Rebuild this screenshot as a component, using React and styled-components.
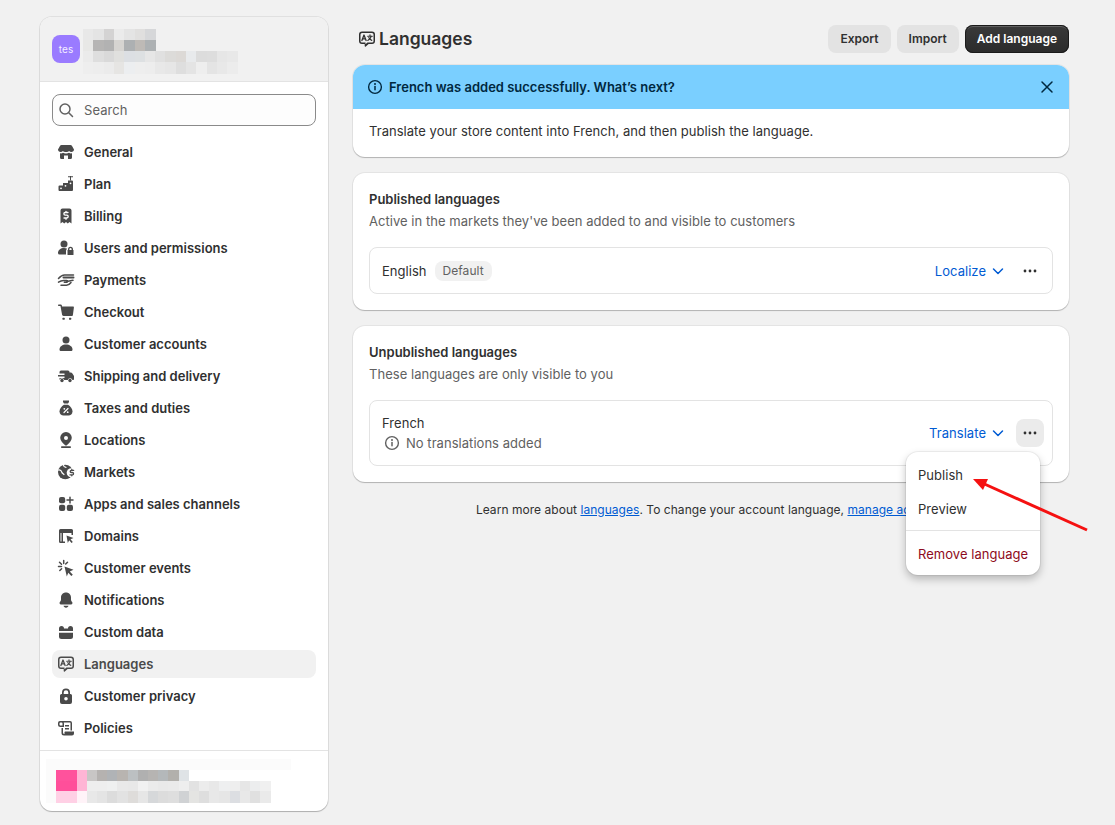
import React from 'react';
import styled, { createGlobalStyle } from 'styled-components';

const GlobalStyle = createGlobalStyle`
  html, body { margin: 0; padding: 0; background: #f1f1f1; }
  body { font-family: Inter, "Noto Sans", "Liberation Sans", sans-serif; font-size: 13px; line-height: 20px; letter-spacing: 0.04px; color: #303030; }
  * { box-sizing: border-box; }
`;

const Page = styled.div`
  position: relative;
  width: 1115px;
  height: 825px;
  overflow: hidden;
  display: flex;
  align-items: flex-start;
  padding: 17px 0 0 40px;
  gap: 25px;
`;

const Sidebar = styled.aside`
  width: 288px;
  height: 794px;
  background: #fff;
  border-radius: 12px;
  overflow: hidden;
  display: flex;
  flex-direction: column;
  box-shadow: 0 0 0 1px rgba(0, 0, 0, 0.07), 0 1px 1px rgba(0, 0, 0, 0.22);
`;

const StoreHeader = styled.div`
  height: 65px;
  flex: none;
  background: #f1f1f1;
  border-bottom: 1px solid #e3e3e3;
  display: flex;
  align-items: flex-start;
  padding: 12px 0 0 12px;
  gap: 3px;
`;

const Avatar = styled.div`
  width: 28px;
  height: 28px;
  margin-top: 6px;
  border-radius: 8px;
  background: #9a7bff;
  color: #f4efff;
  font-size: 10px;
  display: flex;
  align-items: center;
  justify-content: center;
`;

const SearchWrap = styled.label`
  margin: 12px 12px 0;
  height: 32px;
  flex: none;
  display: flex;
  align-items: center;
  gap: 8px;
  padding: 0 6px 0 3px;
  border: 1px solid #8a8a8a;
  border-radius: 8px;
  background: #fdfdfd;
  color: #616161;
`;

const SearchInput = styled.input`
  flex: 1;
  min-width: 0;
  border: 0;
  outline: 0;
  padding: 0;
  background: transparent;
  font: inherit;
  letter-spacing: inherit;
  color: #303030;
  &::placeholder { color: #616161; opacity: 1; }
`;

const Nav = styled.nav`
  flex: 1;
  display: flex;
  flex-direction: column;
  gap: 4px;
  padding: 12px 12px 0;
`;

const NavItem = styled.a`
  height: 28px;
  flex: none;
  display: flex;
  align-items: center;
  gap: 8px;
  padding: 0 4px;
  border-radius: 8px;
  font-weight: 590;
  letter-spacing: 0;
  color: ${p => (p.$active ? '#4a4a4a' : '#303030')};
  background: ${p => (p.$active ? '#f1f1f1' : 'transparent')};
  svg { color: #4a4a4a; flex: none; }
`;

const SideFooter = styled.div`
  height: 61px;
  flex: none;
  border-top: 1px solid #e3e3e3;
  padding: 8px 0 0 6px;
`;

const Main = styled.main`
  width: 716px;
  margin-top: 8px;
  display: flex;
  flex-direction: column;
`;

const TitleBar = styled.header`
  height: 28px;
  display: flex;
  align-items: center;
  justify-content: space-between;
  margin-bottom: 12px;
`;

const Title = styled.h1`
  margin: 0 0 0 4px;
  display: flex;
  align-items: center;
  gap: 2px;
  font-size: 17.5px;
  line-height: 28px;
  font-weight: 600;
  letter-spacing: 0;
  color: #303030;
`;

const Actions = styled.div`
  display: flex;
  gap: 6px;
`;

const Button = styled.button`
  height: 28px;
  padding: 0 12px;
  border-radius: 8px;
  font: inherit;
  font-size: 12px;
  font-weight: 570;
  letter-spacing: 0;
  border: 0;
  color: #303030;
  background: #e3e3e3;
`;

const PrimaryButton = styled(Button)`
  color: #fff;
  background: linear-gradient(#3a3a3a, #2b2b2b);
  box-shadow: 0 0 0 1px #1a1a1a inset, 0 2px 0 0 rgba(255, 255, 255, 0.2) inset;
`;

const Card = styled.section`
  position: relative;
  background: #fff;
  border-radius: 12px;
  margin-bottom: 16px;
  box-shadow: 0 0 0 1px rgba(0, 0, 0, 0.05), 0 1px 1px rgba(0, 0, 0, 0.22);
`;

const Banner = styled(Card)`
  overflow: hidden;
`;

const BannerHead = styled.div`
  height: 44px;
  background: #7acfff;
  color: #00283f;
  display: flex;
  align-items: center;
  gap: 4px;
  padding: 0 12px;
  font-weight: 600;
  letter-spacing: 0;
  span { flex: 1; }
`;

const BannerBody = styled.p`
  margin: 0;
  height: 48px;
  padding: 12px 16px;
`;

const CardBody = styled.div`
  padding: 16px;
`;

const CardTitle = styled.h2`
  margin: 0 0 2px;
  font-size: 13px;
  line-height: 20px;
  font-weight: 600;
  letter-spacing: 0;
`;

const Muted = styled.p`
  margin: 0;
  color: #616161;
`;

const LangRow = styled.div`
  position: relative;
  margin-top: 16px;
  min-height: 47px;
  padding: 0 8px 0 12px;
  border: 1px solid #e3e3e3;
  border-radius: 8px;
  display: flex;
  align-items: center;
  justify-content: space-between;
`;

const LangName = styled.div`
  display: flex;
  align-items: center;
  gap: 8px;
`;

const LangStack = styled.div`
  padding: 12px 0;
`;

const Badge = styled.span`
  height: 20px;
  padding: 0 8px;
  border-radius: 8px;
  background: #f1f1f1;
  color: #616161;
  font-size: 12px;
  display: inline-flex;
  align-items: center;
`;

const Status = styled.div`
  display: flex;
  align-items: center;
  gap: 4px;
  color: #616161;
`;

const RowActions = styled.div`
  display: flex;
  align-items: center;
  gap: 8px;
`;

const LinkButton = styled.a`
  display: inline-flex;
  align-items: center;
  gap: 2px;
  color: #005bd3;
  font-weight: 400;
`;

const IconButton = styled.button`
  width: 28px;
  height: 28px;
  padding: 0;
  border: 0;
  border-radius: 8px;
  color: #303030;
  background: ${p => (p.$open ? '#ebebeb' : 'transparent')};
  display: flex;
  align-items: center;
  justify-content: center;
`;

const Popover = styled.div`
  position: absolute;
  top: 51px;
  right: 12px;
  width: 134px;
  height: 123px;
  padding: 6px 0 0;
  border-radius: 12px;
  background: #fff;
  z-index: 2;
  box-shadow: 0 0 0 1px rgba(0, 0, 0, 0.05), 0 4px 8px rgba(0, 0, 0, 0.25);
`;

const MenuItem = styled.div`
  height: 34px;
  padding: 0 12px;
  display: flex;
  align-items: center;
  white-space: nowrap;
  color: ${p => (p.$danger ? '#8e0b21' : '#303030')};
`;

const MenuLine = styled.hr`
  margin: 4px 0 6px;
  border: 0;
  border-top: 1px solid #e3e3e3;
`;

const FootNote = styled.p`
  margin: 2px 0 0;
  text-align: center;
  white-space: nowrap;
  font-size: 12px;
  a { color: #005bd3; text-decoration: underline; }
`;

const Annotation = styled.svg`
  position: absolute;
  left: 970px;
  top: 472px;
  z-index: 3;
`;

const Glyph = ({ size = 20, children }) => (
  <svg width={size} height={size} viewBox="0 0 20 20" fill="currentColor">{children}</svg>
);

const Line = ({ d, w = 1.5, c = 'currentColor' }) => (
  <path d={d} fill="none" stroke={c} strokeWidth={w} strokeLinecap="round" strokeLinejoin="round" />
);

const LanguageIcon = ({ size }) => (
  <Glyph size={size}>
    <path fillRule="evenodd" d="M5 2.500h10a3 3 0 0 1 3 3v6.500a3 3 0 0 1-3 3h-3.400l-2.800 2.600c-.5.400-1.100.100-1.100-.5V15H5a3 3 0 0 1-3-3V5.500a3 3 0 0 1 3-3zM5 4A1.500 1.500 0 0 0 3.500 5.500V12A1.500 1.500 0 0 0 5 13.500h3.500v1.700l1.900-1.700H15a1.500 1.500 0 0 0 1.500-1.500V5.500A1.500 1.500 0 0 0 15 4z" />
    <Line w={1.3} d="M4.900 11.500 7 6l2.100 5.500M5.600 9.800h2.800" />
    <Line w={1.15} d="M10.700 7.200h4.600M13 5.800v1.400M14.300 7.200c-.4 1.900-1.700 3.300-3.500 4.200M11.800 8.600c.6 1.300 1.600 2.300 3 2.800" />
  </Glyph>
);

const icons = {
  General: (
    <Glyph>
      <path d="M5.500 3h9c.6 0 1.100.3 1.400.8L18 7.500c0 1.400-1.100 2.500-2.700 2.500-.9 0-1.700-.4-2.200-1-.6.6-1.400 1-2.300 1H9.200c-.9 0-1.700-.4-2.300-1-.5.600-1.300 1-2.200 1C3.100 10 2 8.900 2 7.500l2.100-3.700c.3-.5.8-.8 1.400-.8z" />
      <path d="M4 11.300v4.200A1.500 1.500 0 0 0 5.500 17H8v-3.500h4V17h2.500a1.500 1.500 0 0 0 1.500-1.500v-4.200c-1.200.3-2.200 0-3-.6-.8.6-1.600.8-2.500.8h-1c-.9 0-1.700-.2-2.500-.8-.8.6-1.800.9-3 .6z" />
    </Glyph>
  ),
  Plan: (
    <Glyph>
      <path d="M3.500 11.500H7V9h5V6.500h4a1 1 0 0 1 1 1V16a1 1 0 0 1-1 1H3.500a1 1 0 0 1-1-1v-3.500a1 1 0 0 1 1-1z" />
      <circle cx="5" cy="14.300" r=".9" fill="#fff" />
      <circle cx="9.500" cy="11.800" r=".9" fill="#fff" />
      <circle cx="14.500" cy="9.300" r=".9" fill="#fff" />
      <path d="M14 2h1v4.500h-1zM12 2.200h5v1.100h-5z" />
    </Glyph>
  ),
  Billing: (
    <Glyph>
      <path d="M6.500 2.500h7A2 2 0 0 1 15.500 4.500V17.500l-2-1.500-1.700 1.500L10 16l-1.800 1.500L6.500 16l-2 1.500V4.500a2 2 0 0 1 2-2z" />
      <Line c="#fff" w={1.3} d="M12 6.500h-2.800a1.300 1.300 0 0 0 0 2.700h1.600a1.300 1.300 0 0 1 0 2.800H8M10 5.300v1.200M10 12v1.300" />
    </Glyph>
  ),
  'Users and permissions': (
    <Glyph>
      <circle cx="8" cy="6" r="3.500" />
      <path d="M2 15c0-3 2.700-5 6-5 1.200 0 2.300.3 3.200.7-.7.5-1.200 1.400-1.200 2.300v3.500H3.500A1.500 1.500 0 0 1 2 15z" />
      <path fillRule="evenodd" d="M12 12v-.8a2.500 2.500 0 0 1 5 0v.8h.5v4.500a.5.500 0 0 1-.5.5h-5a.5.500 0 0 1-.5-.5V12zm1.400 0h2.200v-.8a1.100 1.100 0 0 0-2.200 0z" />
    </Glyph>
  ),
  Payments: (
    <Glyph>
      <Line d="M2.500 8.500c2-2.200 3.500-3.500 6-3.500h9" />
      <Line w={2} d="M7.500 7.500h10" />
      <Line d="M2.500 12.200c1.500-1 3-1.700 5-1.700h3.300c1 0 1 1.800 0 1.800H8.300M10.800 11.500l6.200-1.200M5 15.300h5.500c1.500 0 3-.7 4.500-2.800" />
    </Glyph>
  ),
  Checkout: (
    <Glyph>
      <path d="M2.700 2.500h1.700c.8 0 1.400.5 1.600 1.200l.1.800h10.900c.6 0 1 .5.9 1l-1 7.500c0 .5-.5 1-1 1H7.500c-.7 0-1.300-.5-1.400-1.200L4.500 4.300c0-.2-.1-.3-.3-.3H2.700a.75.75 0 0 1 0-1.500z" />
      <rect x="6.500" y="15.700" width="2.200" height="2" rx=".5" />
      <rect x="13" y="15.700" width="2.200" height="2" rx=".5" />
    </Glyph>
  ),
  'Customer accounts': (
    <Glyph>
      <circle cx="10" cy="6" r="3.500" />
      <path d="M3.500 15.500c0-3 3-5 6.500-5s6.500 2 6.500 5c0 1-.7 1.500-1.500 1.500H5c-.8 0-1.500-.5-1.500-1.500z" />
    </Glyph>
  ),
  'Shipping and delivery': (
    <Glyph>
      <path d="M5 4.500h7a1.500 1.500 0 0 1 1.500 1.500v.5h1.400c.5 0 1 .3 1.300.7l1.500 2.200c.2.300.3.600.3.900V13c0 .6-.4 1-1 1h-.5a2.500 2.500 0 0 0-4.800 0H8.300a2.500 2.500 0 0 0-4.800 0H3.500v-2h5V10.500H2V9h6.500V7.500H3.500V6A1.500 1.500 0 0 1 5 4.500z" />
      <circle cx="6" cy="14.500" r="1.700" />
      <circle cx="14" cy="14.500" r="1.700" />
    </Glyph>
  ),
  'Taxes and duties': (
    <Glyph>
      <path d="M7 2.500h6V4l-1 1.500H8L7 4z" />
      <path d="M8 6.700h4c2.500 1.500 4.500 4 4.500 6.800 0 2.500-2 4-4 4h-5c-2 0-4-1.500-4-4C3.500 10.700 5.500 8.200 8 6.700z" />
      <Line c="#fff" w={1.2} d="M12 10.500 8 14.500" />
      <circle cx="8.300" cy="10.800" r=".9" fill="#fff" />
      <circle cx="11.700" cy="14.200" r=".9" fill="#fff" />
    </Glyph>
  ),
  Locations: (
    <Glyph>
      <path fillRule="evenodd" d="M10 2a5.800 5.800 0 0 1 5.800 5.800c0 2.800-2.600 5.300-4.700 7.200a1.600 1.600 0 0 1-2.200 0C6.800 13.100 4.200 10.600 4.200 7.800A5.800 5.800 0 0 1 10 2zm0 3.900a2 2 0 1 0 0 4 2 2 0 0 0 0-4z" />
      <rect x="5" y="16.300" width="10" height="1.700" rx=".8" />
    </Glyph>
  ),
  Markets: (
    <Glyph>
      <circle cx="9.300" cy="10" r="7.300" />
      <circle cx="15.300" cy="10.800" r="4.600" fill="#fff" />
      <Line c="#fff" w={1.2} d="M2.500 8c1.700-.2 2.900.5 3.200 2 .3 1.200 1.300 1.700 2.300 2.500M7.300 3c.3 1.500 1.200 2.200 2.700 2.300" />
      <Line w={1.3} d="M17.700 8.300h-2.400a1.100 1.100 0 0 0 0 2.200h1.100a1.100 1.100 0 0 1 0 2.300H14M15.800 7.300v1M15.800 12.800v1" />
    </Glyph>
  ),
  'Apps and sales channels': (
    <Glyph>
      <rect x="3" y="3" width="6.200" height="6.200" rx="2" />
      <rect x="3" y="10.800" width="6.200" height="6.200" rx="2" />
      <rect x="10.800" y="10.800" width="6.200" height="6.200" rx="2" />
      <Line d="M14 3.200v5.800M11 6.100h6" />
    </Glyph>
  ),
  Domains: (
    <Glyph>
      <path fillRule="evenodd" d="M4.500 3h11A1.500 1.500 0 0 1 17 4.500V9h-1.500V7H7v8.500h2V17H4.500A1.500 1.500 0 0 1 3 15.500v-11A1.500 1.500 0 0 1 4.500 3zM4.500 7v8.500h1V7z" />
      <path d="m10.500 9.500 7 2.500-3 1.200 2.300 2.800-1.300 1.100-2.300-2.800-1.400 2.700z" />
    </Glyph>
  ),
  'Customer events': (
    <Glyph>
      <path d="m8.500 8.500 9 3.300-3.700 1.600 3 3.300-1.500 1.400-3-3.300-1.500 3.700z" />
      <Line d="M7.700 2.500v3M3.500 4.200l2 2M2.500 8.500h3M3.800 12.500l1.800-1.800M11.500 4.200l-1.800 1.800" />
    </Glyph>
  ),
  Notifications: (
    <Glyph>
      <path d="M10 2.500c3 0 5 2.300 5 5v2.300c0 .8.500 1.500 1.100 2.200.8.900.3 2.500-1.100 2.500H5c-1.400 0-1.900-1.600-1.100-2.500C4.500 11.300 5 10.600 5 9.800V7.500c0-2.700 2-5 5-5z" />
      <path d="M7.500 15.800h5c-.2 1.100-1.200 1.900-2.500 1.900s-2.300-.8-2.500-1.900z" />
    </Glyph>
  ),
  'Custom data': (
    <Glyph>
      <path d="M3 9V6.500A2.500 2.500 0 0 1 5.500 4 2.500 2.500 0 0 1 8 6.500h4A2.500 2.500 0 0 1 14.500 4 2.500 2.500 0 0 1 17 6.500V9z" />
      <path d="M3 10.800h14v3.700a2.500 2.500 0 0 1-2.500 2.500h-9A2.500 2.500 0 0 1 3 14.500z" />
    </Glyph>
  ),
  Languages: <LanguageIcon />,
  'Customer privacy': (
    <Glyph>
      <path fillRule="evenodd" d="M6 8V6.500a4 4 0 0 1 8 0V8h.5A1.500 1.500 0 0 1 16 9.500V16a2 2 0 0 1-2 2H6a2 2 0 0 1-2-2V9.500A1.500 1.500 0 0 1 5.500 8zm1.700 0h4.600V6.500a2.300 2.300 0 0 0-4.600 0zM10 11a1.800 1.800 0 1 0 0 3.600 1.800 1.800 0 0 0 0-3.600z" />
    </Glyph>
  ),
  Policies: (
    <Glyph>
      <path fillRule="evenodd" d="M4 3h10a2 2 0 0 1 2 2v7.500h-1.500V5a.5.500 0 0 0-.5-.5H7.700c.2.400.3.800.3 1.200V9H4.500A2.500 2.500 0 0 1 2 6.500V5a2 2 0 0 1 2-2zm.5 1.500A1 1 0 0 0 3.500 5.500v1c0 .5.500 1 1 1h2V5.500a1 1 0 0 0-1-1z" />
      <path d="M9 7h4v1.400H9zM9 10h4v1.400H9z" />
      <path d="M7 10v4.500c0 .8.600 1.500 1.300 1.500h.2v-1.500c0-.6.400-1 1-1H18v2a2 2 0 0 1-2 2H8a2.500 2.500 0 0 1-2.500-2.500V10z" />
    </Glyph>
  ),
};

const navItems = Object.keys(icons);

const SearchIcon = () => (
  <Glyph>
    <circle cx="9" cy="9" r="5" fill="none" stroke="currentColor" strokeWidth="1.500" />
    <Line d="m13 13 3.500 3.500" />
  </Glyph>
);

const InfoIcon = () => (
  <Glyph>
    <circle cx="10" cy="10" r="6.400" fill="none" stroke="currentColor" strokeWidth="1.400" />
    <Line d="M10 9.500v3.300" />
    <circle cx="10" cy="7" r="1" />
  </Glyph>
);

const CloseIcon = () => (
  <Glyph>
    <Line d="m5 5 10 10M15 5 5 15" />
  </Glyph>
);

const ChevronIcon = () => (
  <Glyph>
    <Line d="m5.500 8 4.500 4.500L14.500 8" />
  </Glyph>
);

const DotsIcon = () => (
  <Glyph>
    <circle cx="5" cy="10" r="1.400" />
    <circle cx="10" cy="10" r="1.400" />
    <circle cx="15" cy="10" r="1.400" />
  </Glyph>
);

// blurred-out store details, one list of shades per row of the mosaic
const Mosaic = ({ rows, cell, rowHeight, width, height }) => (
  <svg width={width} height={height} shapeRendering="crispEdges">
    {rows.map((row, y) =>
      row.map((fill, x) => (
        <rect key={x} x={x * cell} y={y * rowHeight} width={cell + 0.5} height={rowHeight + 0.5} fill={fill} />
      ))
    )}
  </svg>
);

const headerRows = [
  ['#e8e8e8', '#e4e4e4', '#d4d3d3', '#ebebeb', '#e4e4e4', '#e0dfde', '#d6d7d9'],
  ['#e8e8e6', '#b6b5b4', '#b2b2b2', '#d6d4d1', '#adb0b2', '#bebab6', '#adb1b3'],
  ['#ebebeb', '#dedede', '#d9d9d9', '#e0e0de', '#dcdfe3', '#dde0e2', '#e6e6e6', '#e0e0e0', '#dcdbd9', '#dcd9d6', '#e8eaec', '#dcdcdc', '#dddddd', '#e6e6e6', '#e8e8e8'],
  ['#eeeeee', '#ededed', '#ebebeb', '#e6e5e3', '#eceef0', '#eeeeee', '#ededed', '#e8e8e8', '#e6e6e6', '#dedede', '#e4e4e4', '#eeeeee', '#e4e4e4', '#e8e8e8', '#ececec'],
];

const faint = '#fbfbfb';
const footerRows = [
  Array(24).fill(faint),
  [faint, '#ff529c', '#ff529c', '#ffb5d5', '#c8c6c5', '#b5b2b0', '#b0b3b6', '#b8b4b0', '#bcc0c2', '#b0b0b0', '#b6b4b2', '#b4b8ba', '#b2b0ac', '#dfe3e6'],
  [faint, '#ff4f9a', '#ff4f9a', '#ffb5d5', '#eeeeee', '#eeeeee', '#eff0f0', '#e9e9e9', '#e8e8e8', '#f1f1f1', '#ebebeb', '#e9e9e9', '#eaeaea', '#eeeeee', '#e2e2e2', '#ececec', '#e8e8e8', '#eeeff0', '#eeeeee', '#e6e6e6', '#ecedee', '#f0f0f0'],
  [faint, '#ffd0e5', '#ffd0e5', '#fff3f8', '#e8e8e8', '#e4e4e4', '#dcdcdc', '#e2e2e2', '#dedcda', '#e6e6e6', '#d6d8da', '#dcdcdc', '#dedede', '#d0d2d4', '#e4e4e2', '#dedede', '#e8e8e8', '#e6e6e6', '#dcdee2', '#e8e8e8', '#e0e0e0', '#eaeaea'],
];

export default function App() {
  return (
    <Page>
      <GlobalStyle />
      <Sidebar>
        <StoreHeader>
          <Avatar>tes</Avatar>
          <Mosaic rows={headerRows} cell={10.3} rowHeight={11} width={160} height={46} />
        </StoreHeader>
        <SearchWrap>
          <SearchIcon />
          <SearchInput placeholder="Search" />
        </SearchWrap>
        <Nav>
          {navItems.map(name => (
            <NavItem key={name} $active={name === 'Languages'}>
              {icons[name]}
              {name}
            </NavItem>
          ))}
        </Nav>
        <SideFooter>
          <Mosaic rows={footerRows} cell={10.2} rowHeight={10.8} width={250} height={45} />
        </SideFooter>
      </Sidebar>

      <Main>
        <TitleBar>
          <Title>
            <LanguageIcon />
            Languages
          </Title>
          <Actions>
            <Button>Export</Button>
            <Button>Import</Button>
            <PrimaryButton>Add language</PrimaryButton>
          </Actions>
        </TitleBar>

        <Banner>
          <BannerHead>
            <InfoIcon />
            <span>French was added successfully. What’s next?</span>
            <CloseIcon />
          </BannerHead>
          <BannerBody>Translate your store content into French, and then publish the language.</BannerBody>
        </Banner>

        <Card>
          <CardBody>
            <CardTitle>Published languages</CardTitle>
            <Muted>Active in the markets they've been added to and visible to customers</Muted>
            <LangRow>
              <LangName>
                English
                <Badge>Default</Badge>
              </LangName>
              <RowActions>
                <LinkButton>Localize<ChevronIcon /></LinkButton>
                <IconButton><DotsIcon /></IconButton>
              </RowActions>
            </LangRow>
          </CardBody>
        </Card>

        <Card>
          <CardBody>
            <CardTitle>Unpublished languages</CardTitle>
            <Muted>These languages are only visible to you</Muted>
            <LangRow>
              <LangStack>
                French
                <Status>
                  <InfoIcon />
                  No translations added
                </Status>
              </LangStack>
              <RowActions>
                <LinkButton>Translate<ChevronIcon /></LinkButton>
                <IconButton $open><DotsIcon /></IconButton>
              </RowActions>
              <Popover>
                <MenuItem>Publish</MenuItem>
                <MenuItem>Preview</MenuItem>
                <MenuLine />
                <MenuItem $danger>Remove language</MenuItem>
              </Popover>
            </LangRow>
          </CardBody>
        </Card>

        <FootNote>
          Learn more about <a>languages</a>. To change your account language, <a>manage account</a>.
        </FootNote>
      </Main>

      <Annotation width="125" height="65" viewBox="0 0 125 65">
        <line x1="117" y1="58" x2="10" y2="10" stroke="#f51111" strokeWidth="3" />
        <polygon points="3,7 18,7 13,18" fill="#f51111" />
      </Annotation>
    </Page>
  );
}
